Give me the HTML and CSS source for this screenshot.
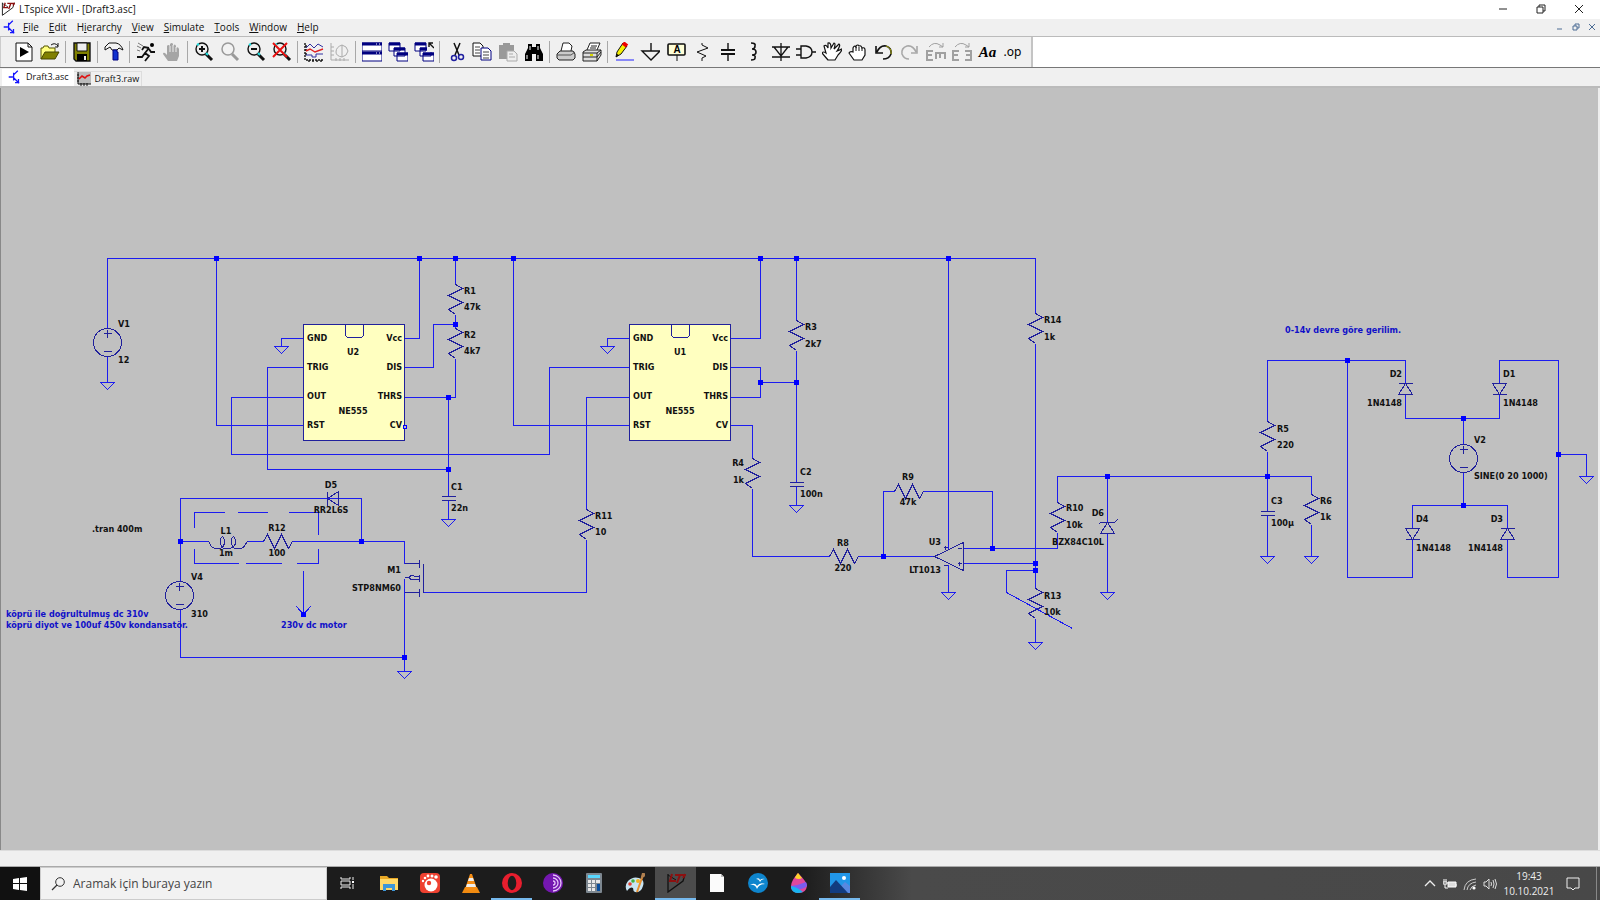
FILE: index.html
```html
<!DOCTYPE html>
<html lang="tr">
<head>
<meta charset="utf-8">
<title>LTspice XVII - [Draft3.asc]</title>
<link rel="stylesheet" href="styles.css">
</head>

<body>
<svg class="defs" aria-hidden="true">
	<defs>
		<!-- schematic parts, origin = top pin -->
		<g id="res"><path d="M0 0L7 4L-7 11L7 18L-7 25L0 30"/></g>
		<g id="resh"><path d="M0 0L4 -7L11 7L18 -7L25 7L29 0"/></g>
		<g id="gnd"><path d="M-7 0H7L0 7Z"/></g>
		<g id="cap"><path d="M-7 0H7M-7 4H7"/></g>
		<g id="dup"><path d="M-7 0H7M0 0L-7 11H7Z"/></g>
		<g id="ddn"><path d="M-7 11H7M0 11L-7 0H7Z"/></g>
		<g id="src"><circle r="14"/><path d="M-4 -9H4M0 -13V-5M-4 9H4"/></g>
		<g id="dot"><path d="M-2 -2h4v4h-4z"/></g>
		<g id="ne555">
			<rect class="chip" width="101" height="116"/>
			<path d="M42 0V9Q42 13 46 13H56Q60 13 60 9V0"/>
		</g>
		<!-- shared icons -->
		<g id="logo">
			<path d="M2 1V19L17 8L19 1" fill="none" stroke="#111" stroke-width="1.3"/>
			<path d="M2 2L10 7" fill="none" stroke="#111"/>
			<path d="M6 1L4 8H10M9 2H19L17 5M14 2L11 10" stroke="#8c1010" stroke-width="2" fill="none"/>
		</g>
		<g id="npn"><path d="M1 10H7M8 4V15M8 7L14 1M8 11L16 19M15 13V18H10" fill="none" stroke="#1414ff" stroke-width="1.8"/></g>
		<g id="lens"><circle cx="8" cy="7" r="6" fill="#eee" stroke="#111" stroke-width="1.4"/><path d="M12 12L18 18" stroke="#111" stroke-width="3"/></g>
		<g id="cascade">
			<path d="M1 1h11v8H1zM6 6h11v8H6zM9 11h11v8H9z" fill="#fff" stroke="#000080"/>
			<path d="M1 2h11M6 7h11M9 12h11" stroke="#000080" stroke-width="3"/>
		</g>
	</defs>
</svg>

<div class="app">
	<header class="title">
		<svg class="i14" viewBox="0 0 20 20"><use href="#logo"/></svg>
		<h1>LTspice XVII - [Draft3.asc]</h1>
		<div class="win">
			<button aria-label="Minimize"><svg viewBox="0 0 10 10"><path d="M1 5H9"/></svg></button>
			<button aria-label="Restore"><svg viewBox="0 0 10 10"><path d="M1 3H7V9H1ZM3 3V1H9V7H7"/></svg></button>
			<button aria-label="Close"><svg viewBox="0 0 10 10"><path d="M1 1L9 9M9 1L1 9"/></svg></button>
		</div>
	</header>

	<nav class="menu">
		<svg class="i14" viewBox="0 0 20 20"><use href="#npn"/></svg>
		<button><u>F</u>ile</button>
		<button><u>E</u>dit</button>
		<button>H<u>i</u>erarchy</button>
		<button><u>V</u>iew</button>
		<button><u>S</u>imulate</button>
		<button><u>T</u>ools</button>
		<button><u>W</u>indow</button>
		<button><u>H</u>elp</button>
		<div class="mdi">
			<button aria-label="Minimize sheet"><svg viewBox="0 0 8 8"><path d="M1 6H6"/></svg></button>
			<button aria-label="Restore sheet"><svg viewBox="0 0 8 8"><path d="M1 3H5V7H1ZM3 3V1H7V5H5"/></svg></button>
			<button aria-label="Close sheet"><svg viewBox="0 0 8 8"><path d="M1 1L7 7M7 1L1 7"/></svg></button>
		</div>
	</nav>

	<div class="tools">
		<div class="bar">
			<button aria-label="New schematic"><svg viewBox="0 0 20 20"><path d="M2 1H14L18 5V19H2Z" fill="#fff" stroke="#111"/><path d="M14 1V5H18" fill="none" stroke="#111"/><path d="M6 5L15 10L6 15Z"/></svg></button>
			<button aria-label="Open"><svg viewBox="0 0 20 20"><path d="M1 17V6H3L4 4H8L9 6H15V10" fill="#ffff80" stroke="#555500"/><path d="M1 17L5 10H19L15 17Z" fill="#808000" stroke="#444400"/><path d="M11 3Q15 0 18 4M18 1V5H15" fill="none" stroke="#111"/></svg></button>
			<i></i>
			<button aria-label="Save"><svg viewBox="0 0 20 20"><path d="M2 1H18V19H4L2 17Z" fill="#808000" stroke="#111" stroke-width="1.4"/><path d="M5 1H15V9H5Z" fill="#f0f0f0" stroke="#111"/><path d="M5 12H15V19H5Z"/><path d="M12 14h2v4h-2z" fill="#eee"/></svg></button>
			<i></i>
			<button aria-label="Control panel"><svg viewBox="0 0 20 20"><path d="M1 8V5L5 1H12Q17 2 19 8L15 6L13 8H8L6 5Z" fill="#f4f4f4" stroke="#111"/><path d="M9 8H13V10H14V18H9V10Z" fill="#1030d0" stroke="#000080"/></svg></button>
			<i></i>
			<button aria-label="Run"><svg viewBox="0 0 20 20"><circle cx="16" cy="3" r="2"/><path d="M13 6L9 11L13 14L9 19M9 11L6 15H1M13 6L8 5L6 8M13 7L15 10H19" fill="none" stroke="#111" stroke-width="1.8"/><path d="M2 1L7 4M1 4L5 6M1 8L4 9" stroke="#777"/></svg></button>
			<button aria-label="Halt" disabled><svg viewBox="0 0 20 20"><path d="M6 19L1 12Q1 10 3 11L5 13V4Q6 2 8 4V2Q10 0 11 2V4Q13 1 14 4V6Q16 4 17 7V14L15 19Z" fill="#a5a5a5"/><path d="M8 4V10M11 3V10M14 5V10" stroke="#eee"/></svg></button>
			<i></i>
			<button aria-label="Zoom in"><svg viewBox="0 0 20 20"><use href="#lens"/><path d="M5 7H11M8 4V10" stroke="#111" stroke-width="2"/><path d="M3 3L5 2M12 11l2 2" stroke="#20e0e0" stroke-width="2"/></svg></button>
			<button aria-label="Pan" disabled><svg viewBox="0 0 20 20"><circle cx="8" cy="7" r="6" fill="#f2f2f2" stroke="#999" stroke-width="1.5"/><path d="M12 12L18 18" stroke="#999" stroke-width="3"/></svg></button>
			<button aria-label="Zoom out"><svg viewBox="0 0 20 20"><use href="#lens"/><path d="M5 7H11" stroke="#111" stroke-width="2"/><path d="M3 3L5 2M12 11l2 2" stroke="#20e0e0" stroke-width="2"/></svg></button>
			<button aria-label="Zoom full extents"><svg viewBox="0 0 20 20"><use href="#lens"/><path d="M3 3L5 2M12 11l2 2" stroke="#20e0e0" stroke-width="2"/><path d="M1 1L15 15M15 1L1 15" stroke="#e81010" stroke-width="2"/></svg></button>
			<i></i>
			<button aria-label="Autorange"><svg viewBox="0 0 20 20"><path d="M1 1V18H19M1 4h2M1 8h2M1 12h2M5 18v2M9 18v2M13 18v2M17 18v2" fill="none" stroke="#111" stroke-width="1.4" stroke-dasharray="2 1"/><path d="M2 6L6 2L10 6L14 2L19 5M2 13H8V15H12V12H19" fill="none" stroke="#3030a0"/><path d="M2 9L6 7L11 10L19 7" fill="none" stroke="#e02020" stroke-width="1.4"/></svg></button>
			<button aria-label="FFT" disabled><svg viewBox="0 0 20 20"><path d="M1 1V18H19M1 5h3M1 9h3M1 13h3M6 16v3M10 16v3M14 16v3M12 3Q6 5 6 10Q6 14 12 15M12 3V15M12 3Q17 4 18 9Q17 14 12 15" fill="none" stroke="#aaa"/></svg></button>
			<i></i>
			<button aria-label="Tile windows"><svg viewBox="0 0 20 20"><path d="M0 1H20V19H0Z" fill="#fff" stroke="#000080"/><path d="M0 2H20M0 11H20" stroke="#000080" stroke-width="3"/><path d="M14 2h1M17 2h1M14 11h1M17 11h1" stroke="#fff"/><path d="M0 9H20" stroke="#000080"/></svg></button>
			<button aria-label="Cascade windows"><svg viewBox="0 0 20 20"><use href="#cascade"/></svg></button>
			<button aria-label="Close all"><svg viewBox="0 0 20 20"><use href="#cascade"/><path d="M13 0H20V10H13Z" fill="#f0f0f0"/><path d="M20 6L15 1M15 5V1H19" fill="none" stroke="#111" stroke-width="1.4"/></svg></button>
			<i></i>
			<button aria-label="Cut"><svg viewBox="0 0 20 20"><path d="M8 1L13 13M14 1L9 13" stroke="#111" stroke-width="1.5"/><g fill="none" stroke="#2020a0" stroke-width="1.5"><circle cx="8" cy="16" r="2.5"/><circle cx="15" cy="15" r="2.5"/></g></svg></button>
			<button aria-label="Copy"><svg viewBox="0 0 20 20"><path d="M1 1H8L11 4V14H1Z" fill="#fff" stroke="#111"/><path d="M3 5H8M3 8H8M3 11H8" stroke="#444"/><path d="M9 6H16L19 9V18H9Z" fill="#fff" stroke="#000080"/><path d="M11 10H17M11 13H17M11 16H17" stroke="#444"/></svg></button>
			<button aria-label="Paste" disabled><svg viewBox="0 0 20 20"><path d="M1 3H5V1H12V3H16V17H1Z" fill="#999"/><path d="M9 9H16L19 12V19H9Z" fill="#eee" stroke="#aaa"/><path d="M11 12H15M11 15H17" stroke="#aaa"/></svg></button>
			<button aria-label="Find"><svg viewBox="0 0 20 20"><path d="M4 2H8V5H12V2H16V6L19 12V19H12V12H8V19H1V12L4 6Z"/><path d="M3 13V17M14 13V17M6 4V8M14 4V8" stroke="#fff"/></svg></button>
			<i></i>
			<button aria-label="Print"><svg viewBox="0 0 20 20"><path d="M5 9L7 1H13L16 4L15 9" fill="#fff" stroke="#222"/><path d="M1 12L4 9H17L19 12V16L17 18H3L1 16Z" fill="#ccc" stroke="#222"/><path d="M1 13H15L19 10" fill="none" stroke="#555"/></svg></button>
			<button aria-label="Print setup"><svg viewBox="0 0 20 20"><path d="M5 8L8 1H18L15 8" fill="#fff" stroke="#222"/><path d="M9 4H15M8 6H14" stroke="#222"/><path d="M1 10L4 8H19V13L15 19H1Z" fill="#ddd" stroke="#222"/><path d="M1 11H15L19 8M1 15H15L19 10M15 11V19" fill="none" stroke="#222"/><path d="M8 13h3" stroke="#d8d800" stroke-width="2"/></svg></button>
			<i></i>
			<button aria-label="Wire"><svg viewBox="0 0 20 20"><path d="M2 15L3 10L9 1L13 4L7 12Z" fill="#f4f000" stroke="#111"/><path d="M9 1L13 4" stroke="#e00" stroke-width="4"/><path d="M2 15L3 12L5 13Z"/><path d="M2 18H20" stroke="#2020ff"/></svg></button>
			<button aria-label="Ground"><svg viewBox="0 0 20 20"><path d="M11 1V9M2 9H20L11 18Z" fill="none" stroke="#111" stroke-width="1.4"/></svg></button>
			<button aria-label="Label net"><svg viewBox="0 0 20 20"><rect x="2" y="2" width="17" height="11" rx="1" fill="#ffffd8" stroke="#111" stroke-width="1.6"/><path d="M11 13V19" stroke="#111"/><text x="11" y="11" font-size="10" text-anchor="middle">A</text></svg></button>
			<button aria-label="Resistor"><svg viewBox="0 0 20 20"><path d="M10 1V3L16 6L5 10L14 14L10 16V19" fill="none" stroke="#111"/></svg></button>
			<button aria-label="Capacitor"><svg viewBox="0 0 20 20"><path d="M10 1V8M10 12V19" stroke="#111" stroke-width="1.4"/><path d="M3 8H17M3 12H17" stroke="#111" stroke-width="2"/></svg></button>
			<button aria-label="Inductor"><svg viewBox="0 0 20 20"><path d="M7 1Q12 1 11 4Q11 7 8 7Q12 7 12 10Q12 13 8 13Q12 13 11 16Q11 18 7 18" fill="none" stroke="#111" stroke-width="1.6"/></svg></button>
			<button aria-label="Diode"><svg viewBox="0 0 20 20"><path d="M11 1V19M2 5H20M4 5L11 14L18 5M2 15H20" fill="none" stroke="#111" stroke-width="1.3"/></svg></button>
			<button aria-label="Component"><svg viewBox="0 0 20 20"><path d="M5 4H10Q16 5 16 10Q16 15 10 16H5ZM0 7H5M0 13H5M16 10H20" fill="none" stroke="#111" stroke-width="1.4"/></svg></button>
			<button aria-label="Move"><svg viewBox="0 0 20 20"><path d="M6 18L0 11Q1 9 4 11L2 4Q4 2 6 6L6 1Q9 0 9 6L12 1Q14 1 12 7L17 2Q19 3 15 9L20 7Q20 9 16 13L13 18Z" fill="#fff" stroke="#111" stroke-width="1.2"/></svg></button>
			<button aria-label="Drag"><svg viewBox="0 0 20 20"><path d="M6 18L1 11Q2 9 5 10V6Q6 3 8 5V4Q10 2 11 4Q13 3 14 6Q17 5 17 8V13L14 18Z" fill="#fff" stroke="#111" stroke-width="1.2"/><path d="M8 5V9M11 5V9M14 6V9" stroke="#111"/></svg></button>
			<button aria-label="Undo"><svg viewBox="0 0 20 20"><path d="M2 4V11H9M3 10Q6 3 12 4Q18 6 17 12Q15 17 9 17" fill="none" stroke="#111" stroke-width="1.6"/><path d="M12 4Q18 6 17 12" fill="none" stroke="#a0a000"/></svg></button>
			<button aria-label="Redo" disabled><svg viewBox="0 0 20 20"><path d="M17 4V11H11M16 10Q13 3 7 4Q1 6 2 12Q4 17 9 17" fill="none" stroke="#a8a8a8" stroke-width="1.6"/></svg></button>
			<button aria-label="Rotate" disabled><svg viewBox="0 0 20 20"><path d="M7 9H1V18H7M1 13H6M10 17V11H19V17M14 11V16" fill="none" stroke="#a0a0a0" stroke-width="2"/><path d="M3 5Q8 -1 14 3L17 5M17 1V5H13" fill="none" stroke="#a0a0a0"/></svg></button>
			<button aria-label="Mirror" disabled><svg viewBox="0 0 20 20"><path d="M7 9H1V18H7M1 13H6M13 9H19V18H13M19 13H14" fill="none" stroke="#a0a0a0" stroke-width="2"/><path d="M3 5Q8 -1 14 3L17 5M17 1V5H13" fill="none" stroke="#a0a0a0"/></svg></button>
			<button class="txt aa">Aa</button>
			<button class="txt op">.op</button>
		</div>
	</div>

	<div class="tabs">
		<button class="on"><svg class="i14" viewBox="0 0 20 20"><use href="#npn"/></svg>Draft3.asc</button>
		<button><svg class="i14" viewBox="0 0 14 14"><rect x="1" width="13" height="12" fill="#bbb"/><path d="M1 0V12H14M0 3h2M0 6h2M0 9h2M4 11v3M7 11v3M10 11v3" fill="none" stroke="#111"/><path d="M2 7L5 4L8 6L10 4L13 3" fill="none" stroke="#e01010" stroke-width="1.6"/></svg>Draft3.raw</button>
	</div>

	<main class="sheet">
		<svg class="sch">
			<g transform="translate(-.5 -87.5)">
				<!-- wires -->
				<g class="wire">
					<path d="M107 328V258H1035V313M107 356V382"/>
					<path d="M216 258V425H303M303 338H281V346M303 367H267V469H448M303 397H231V454H549V367H629"/>
					<path d="M404 338H419V258M404 367H433V324H455M455 258V284M455 314V328M455 358V397H404M448 397V496M448 500V519"/>
					<path d="M513 258V425H629M629 338H607V346M629 397H586V509M586 539V592H423"/>
					<path d="M730 338H760V258M730 367H760V397H730M760 382H796M796 258V320M796 350V482M796 486V505"/>
					<path d="M730 425H752V458M752 488V556H829M858 556H934M883 556V491H894M923 491H992V548M963 548H1057V532M1057 502V476H1311V494M963 563H1035"/>
					<path d="M948 258V548M948 564V592M1035 343V588M1035 618V642M1035 570H1006V592L1072 628"/>
					<path d="M1107 476V522M1107 533V592"/>
					<path d="M1267 421V360H1405V383M1267 451V511M1267 515V556M1311 524V556M1347 360V577H1412V539M1412 528V505H1507V528"/>
					<path d="M1405 394V418H1499V394M1499 383V360H1558V577H1507V539M1463 418V444M1463 472V505M1558 454H1586V476"/>
					<path d="M180 581V498H361V541M180 541H208M247 541H263M292 541H404V563M180 609V657H404M404 578V671"/>
					<path d="M194 527V512H224M237 512H267M288 512H318V534M194 548V563H238M245 563H281M296 563H318V548"/>
					<path d="M303 570V614M296 606L303 614L310 606"/>
					<use href="#gnd" x="107" y="382"/><use href="#gnd" x="281" y="346"/><use href="#gnd" x="448" y="519"/>
					<use href="#gnd" x="404" y="671"/><use href="#gnd" x="607" y="346"/><use href="#gnd" x="796" y="505"/>
					<use href="#gnd" x="948" y="592"/><use href="#gnd" x="1035" y="642"/><use href="#gnd" x="1107" y="592"/>
					<use href="#gnd" x="1267" y="556"/><use href="#gnd" x="1311" y="556"/><use href="#gnd" x="1586" y="476"/>
				</g>

				<!-- parts -->
				<g class="part">
					<use href="#ne555" x="303" y="324"/><use href="#ne555" x="629" y="324"/>
					<use href="#src" x="107" y="342"/><use href="#src" x="179" y="595"/><use href="#src" x="1463" y="458"/>
					<use href="#res" x="455" y="284"/><use href="#res" x="455" y="328"/><use href="#res" x="586" y="509"/>
					<use href="#res" x="796" y="320"/><use href="#res" x="752" y="458"/><use href="#res" x="1035" y="313"/>
					<use href="#res" x="1035" y="588"/><use href="#res" x="1057" y="502"/><use href="#res" x="1267" y="421"/>
					<use href="#res" x="1311" y="494"/>
					<use href="#resh" x="263" y="541"/><use href="#resh" x="829" y="556"/><use href="#resh" x="894" y="491"/>
					<use href="#cap" x="448" y="496"/><use href="#cap" x="796" y="482"/><use href="#cap" x="1267" y="511"/>
					<use href="#dup" x="1405" y="383"/><use href="#dup" x="1507" y="528"/>
					<use href="#ddn" x="1499" y="383"/><use href="#ddn" x="1412" y="528"/>
					<path d="M327 491V505M327 498L338 491V505Z"/>
					<path d="M1098 524L1100 522H1114L1117 519M1107 522L1100 533H1114Z"/>
					<path d="M208 541L211 546Q213 548 216 548H219Q224 547 224 541Q223 536 222 536Q220 537 220 541Q220 548 225 548H229Q235 547 235 541Q234 536 233 536Q231 537 231 541Q231 548 236 548H239Q243 548 244 545L247 541"/>
					<path d="M404 563H419M404 592H419M404 577H409M413 576H419M413 579H419M419 559V567M419 574V581M419 588V596M423 563V592M413 575H410L409 577L410 579H413"/>
					<path d="M934 556L963 542V570Z"/>
					<path d="M943 547H947M945 545V549M943 565H947M957 548H961M957 563H961M959 561V565"/>
				</g>
				<rect class="open" x="403" y="425" width="3" height="3"/>

				<g class="node">
					<use href="#dot" x="216" y="258"/><use href="#dot" x="419" y="258"/><use href="#dot" x="455" y="258"/>
					<use href="#dot" x="513" y="258"/><use href="#dot" x="760" y="258"/><use href="#dot" x="796" y="258"/>
					<use href="#dot" x="948" y="258"/><use href="#dot" x="455" y="324"/><use href="#dot" x="448" y="397"/>
					<use href="#dot" x="448" y="469"/><use href="#dot" x="760" y="382"/><use href="#dot" x="796" y="382"/>
					<use href="#dot" x="883" y="556"/><use href="#dot" x="992" y="548"/><use href="#dot" x="1035" y="563"/>
					<use href="#dot" x="1035" y="570"/><use href="#dot" x="1107" y="476"/><use href="#dot" x="1267" y="476"/>
					<use href="#dot" x="1347" y="360"/><use href="#dot" x="1463" y="418"/><use href="#dot" x="1463" y="505"/>
					<use href="#dot" x="1558" y="454"/><use href="#dot" x="180" y="541"/><use href="#dot" x="361" y="541"/>
					<use href="#dot" x="404" y="657"/><use href="#dot" x="303" y="614"/>
				</g>
			</g>

			<!-- names and values -->
			<g transform="translate(-1 -89)">
				<g class="lbl">
					<text x="118" y="328">V1</text><text x="118" y="364">12</text>
					<text x="307" y="342">GND</text><text x="307" y="371">TRIG</text><text x="307" y="400">OUT</text><text x="307" y="429">RST</text>
					<text x="633" y="342">GND</text><text x="633" y="371">TRIG</text><text x="633" y="400">OUT</text><text x="633" y="429">RST</text>
					<text x="464" y="295">R1</text><text x="464" y="311">47k</text>
					<text x="464" y="339">R2</text><text x="464" y="355">4k7</text>
					<text x="451" y="491">C1</text><text x="451" y="512">22n</text>
					<text x="595" y="520">R11</text><text x="595" y="536">10</text>
					<text x="805" y="331">R3</text><text x="805" y="348">2k7</text>
					<text x="800" y="476">C2</text><text x="800" y="498">100n</text>
					<text x="1044" y="324">R14</text><text x="1044" y="341">1k</text>
					<text x="1044" y="600">R13</text><text x="1044" y="616">10k</text>
					<text x="1066" y="512">R10</text><text x="1066" y="529">10k</text>
					<text x="1277" y="433">R5</text><text x="1277" y="449">220</text>
					<text x="1271" y="505">C3</text><text x="1271" y="527">100µ</text>
					<text x="1320" y="505">R6</text><text x="1320" y="521">1k</text>
					<text x="1503" y="378">D1</text><text x="1503" y="407">1N4148</text>
					<text x="1416" y="523">D4</text><text x="1416" y="552">1N4148</text>
					<text x="1474" y="444">V2</text><text x="1474" y="480">SINE(0 20 1000)</text>
					<text x="191" y="581">V4</text><text x="191" y="618">310</text>
					<text x="92" y="533">.tran 400m</text>
				</g>
				<g class="lbl end">
					<text x="402" y="342">Vcc</text><text x="402" y="371">DIS</text><text x="402" y="400">THRS</text><text x="402" y="429">CV</text>
					<text x="728" y="342">Vcc</text><text x="728" y="371">DIS</text><text x="728" y="400">THRS</text><text x="728" y="429">CV</text>
					<text x="744" y="467">R4</text><text x="744" y="484">1k</text>
					<text x="941" y="546">U3</text><text x="941" y="574">LT1013</text>
					<text x="1104" y="517">D6</text><text x="1104" y="546">BZX84C10L</text>
					<text x="1402" y="378">D2</text><text x="1402" y="407">1N4148</text>
					<text x="1503" y="523">D3</text><text x="1503" y="552">1N4148</text>
					<text x="401" y="574">M1</text><text x="401" y="592">STP8NM60</text>
				</g>
				<g class="lbl mid">
					<text x="353" y="356">U2</text><text x="353" y="415">NE555</text>
					<text x="680" y="356">U1</text><text x="680" y="415">NE555</text>
					<text x="331" y="489">D5</text><text x="331" y="514">RR2L6S</text>
					<text x="226" y="535">L1</text><text x="226" y="557">1m</text>
					<text x="277" y="532">R12</text><text x="277" y="557">100</text>
					<text x="843" y="547">R8</text><text x="843" y="572">220</text>
					<text x="908" y="481">R9</text><text x="908" y="506">47k</text>
				</g>
				<g class="lbl note">
					<text x="1285" y="334">0-14v devre göre gerilim.</text>
					<text x="6" y="618">köprü ile doğrultulmuş dc 310v</text>
					<text x="6" y="629">köprü diyot ve 100uf 450v kondansatör.</text>
					<text x="281" y="629">230v dc motor</text>
				</g>
			</g>
		</svg>
	</main>
	<div class="status"></div>

	<footer class="task">
		<button class="start" aria-label="Başlat"><svg viewBox="0 0 14 14"><path d="M0 2L6 1V6H0ZM7 1L14 0V6H7ZM0 7H6V13L0 12ZM7 7H14V14L7 13Z" fill="#fff"/></svg></button>
		<label class="search">
			<svg viewBox="0 0 14 14"><circle cx="9" cy="5" r="4.3" fill="none" stroke="#333"/><path d="M6 8L1 13" stroke="#333" stroke-width="1.2"/></svg>
			<input type="text" placeholder="Aramak için buraya yazın" aria-label="Arama">
		</label>
		<div class="apps">
			<button aria-label="Görev görünümü"><svg viewBox="0 0 20 20"><path d="M3 4V6H12V4M3 16V14H12V16M3 8H12V12H3ZM15 4V7M15 11V16" fill="none" stroke="#eee"/><path d="M14 8h2v2h-2z" fill="#fff"/></svg></button>
			<button aria-label="Dosya Gezgini"><svg viewBox="0 0 20 20"><path d="M1 3H8L10 5H19V17H1Z" fill="#e8a825"/><path d="M1 6H19V17H1Z" fill="#ffd868"/><path d="M4 18V11H16V18H13V15H7V18Z" fill="#3d96d8"/></svg></button>
			<button aria-label="GOM"><svg viewBox="0 0 20 20"><rect width="20" height="20" rx="4" fill="#ee4130"/><circle cx="11" cy="12" r="6.5" fill="#fff"/><circle cx="9" cy="10" r="2.2" fill="#ee4130"/><g fill="#fff"><circle cx="3" cy="8" r="1.2"/><circle cx="5" cy="5" r="1.3"/><circle cx="8" cy="3" r="1.4"/><circle cx="12" cy="3" r="1.5"/><circle cx="16" cy="4" r="1.8"/></g></svg></button>
			<button aria-label="VLC"><svg viewBox="0 0 20 20"><path d="M4 14H16L19 20H1Z" fill="#f08a10"/><path d="M9 1H11L16 16Q10 19 4 16Z" fill="#f78e14"/><path d="M8 5H12L13 8H7ZM6 11H14L15 14H5Z" fill="#eee"/></svg></button>
			<button class="run" aria-label="Opera"><svg viewBox="0 0 20 20"><circle cx="10" cy="10" r="10" fill="#e81e2e"/><ellipse cx="10" cy="10" rx="4.3" ry="7.2" fill="#1e1e1e"/></svg></button>
			<button aria-label="Tor Browser"><svg viewBox="0 0 20 20"><circle cx="10" cy="10" r="10" fill="#7417b0"/><path d="M10 2A8 8 0 0 1 10 18M10 5A5 5 0 0 1 10 15M10 8A2 2 0 0 1 10 12" fill="none" stroke="#e6c6f8" stroke-width="1.3"/></svg></button>
			<button aria-label="Hesap Makinesi"><svg viewBox="0 0 20 20"><rect x="2" width="16" height="20" rx="1" fill="#7d8790"/><path d="M4 2H16V5H4Z" fill="#58d8ff"/><path d="M4 7h3v3H4zM8 7h3v3H8zM12 7h4v3h-4zM4 11h3v3H4zM8 11h3v3H8zM4 15h3v3H4zM8 15h3v3H8z" fill="#e8e8e8"/><path d="M13 11h3v7h-3z" fill="#0a4e9c"/></svg></button>
			<button aria-label="Paint"><svg viewBox="0 0 20 20"><path d="M2 18Q-1 13 3 8Q8 3 14 5Q20 7 18 13Q16 20 10 19Q8 18 8 15Q5 13 2 18Z" fill="#c8e4f2"/><circle cx="5" cy="11" r="1.8" fill="#e04030"/><circle cx="8" cy="8" r="1.8" fill="#40b040"/><circle cx="13" cy="8" r="2" fill="#f0b020"/><path d="M12 19L18 2" stroke="#e89030" stroke-width="2"/><path d="M17 4L18 0L20 2Z" stroke="#b08050" stroke-width="2"/></svg></button>
			<button class="run act" aria-label="LTspice XVII"><svg viewBox="0 0 20 20"><use href="#logo"/></svg></button>
			<button aria-label="Belge"><svg viewBox="0 0 20 20"><path d="M3 1H14L17 4V19H3Z" fill="#fbfbfb"/><path d="M14 1V4H17" fill="#bbb"/></svg></button>
			<button aria-label="OpenOffice"><svg viewBox="0 0 20 20"><circle cx="10" cy="10" r="10" fill="#0e85cd"/><path d="M8 6Q11 4 12 7Q14 5 17 6Q13 6 12 9Q11 6 8 6ZM2 12Q7 9 9 13Q12 9 17 11Q11 11 9 16Q7 11 2 12Z" fill="#fff"/></svg></button>
			<button aria-label="Paint 3D"><svg viewBox="0 0 20 20"><path d="M9 0Q18 9 18 13Q17 20 10 20Q2 20 2 13Q2 8 9 0Z" fill="#e0489c"/><path d="M9 0Q6 4 6 5Q10 7 13 5Z" fill="#ffd42a"/><path d="M2 13Q10 12 17 9Q18 11 18 13Q14 17 3 17Z" fill="#7a5cf0"/><path d="M2 13Q8 14 14 19Q8 21 5 19Q2 17 2 13Z" fill="#18b4f0"/></svg></button>
			<button class="run" aria-label="Fotoğraflar"><svg viewBox="0 0 20 20"><path d="M0 0H20V20H0Z" fill="#2196e8"/><path d="M10 14L15 9L20 13V20H10Z" fill="#5888e0"/><path d="M0 14L6 7L18 20H0Z" fill="#123c80"/><circle cx="14" cy="5" r="2" fill="#fff"/></svg></button>
		</div>
		<div class="tray">
			<button aria-label="Gizli simgeler"><svg viewBox="0 0 14 14"><path d="M2 9L7 4L12 9" fill="none" stroke="#eee" stroke-width="1.3"/></svg></button>
			<button aria-label="Pil"><svg viewBox="0 0 14 14"><path d="M5 5H13V10H5Z" fill="#ddd" stroke="#fff"/><path d="M14 7v2M1 2v3M3 2v3M0 5h4v2h-4zM2 7v4H5" stroke="#fff" fill="none"/></svg></button>
			<button aria-label="Ağ"><svg viewBox="0 0 14 14"><path d="M1 13Q2 3 13 2M4 13Q5 6 13 5M7 13Q8 9 13 8" fill="none" stroke="#ccc"/><circle cx="11" cy="11" r="1.6" fill="#fff"/></svg></button>
			<button aria-label="Ses"><svg viewBox="0 0 14 14"><path d="M1 5H3L6 2V12L3 9H1ZM8 5Q9 7 8 9M10 3Q12 7 10 11M12 2Q15 7 12 12" fill="none" stroke="#ddd"/></svg></button>
			<div class="clock"><time>19:43</time><time>10.10.2021</time></div>
			<button class="note-btn" aria-label="Bildirimler"><svg viewBox="0 0 14 14"><path d="M1 1H13V11H9L7 13L5 11H1Z" fill="none" stroke="#eee"/></svg></button>
		</div>
	</footer>
</div>
</body>
</html>
```
FILE: styles.css
```css
*{margin:0; padding:0; box-sizing:border-box;}
body{font:10px/14px "Open Sans","Noto Sans",sans-serif; color:#111; background:#f0f0f0;}
button,input{font:inherit; color:inherit; border:none; background:none; outline:none;}
svg{display:block; flex:none;}
.defs{position:absolute; width:0; height:0;}
.app{display:flex; flex-direction:column; height:100vh;}
.i14{width:14px; height:14px;}

.title{display:flex; align-items:center; height:19px; background:#fff; padding:0 0 2px 1px;}
.title h1{flex:1; margin-left:4px; font-size:10px; font-weight:normal;}
.win{display:flex; margin-right:2px;}
.win button{width:38px; height:16px; display:flex; align-items:center; justify-content:center;}
.win svg{width:10px; height:10px; fill:none; stroke:#222;}

.menu{display:flex; align-items:center; height:17px; padding:0 0 2px 3px;}
.menu .i14{margin-right:1px;}
.menu button{padding:0 5px;}
.mdi{display:flex; margin-left:auto;}
.mdi button{width:16px; padding:0 4px;}
.mdi svg{width:8px; height:8px; fill:none; stroke:#4c6c94;}

.tools{height:32px; background:#fff; border-top:1px solid #bbb; border-bottom:1px solid #777;}
.bar{display:flex; align-items:center; width:max-content; height:30px; padding:0 6px 0 10px; background:#f0f0f0; border-right:2px solid #c4c4c4; border-left:1px solid #ccc;}
.bar button{width:26px; height:26px; display:flex; align-items:center; justify-content:center;}
.bar svg{width:20px; height:20px;}
.bar svg text{font-family:"Liberation Sans",sans-serif; font-weight:bold;}
.bar i{width:1px; height:22px; margin:0 3px 0 2px; background:#a8a8a8;}
.bar .txt{width:25px; color:#000;}
.bar .aa{font:italic bold 15px/20px "Liberation Serif",serif;}
.bar .op{font:12px/16px "Noto Sans",sans-serif;}

.tabs{display:flex; align-items:flex-end; height:20px; padding:1px 0 0 2px; border-bottom:2px solid #bbb;}
.tabs button{display:flex; align-items:center; height:15px; padding:0 2px 0 3px; border-right:1px solid #ddd; border-top:1px solid #ddd; font-size:9px;}
.tabs svg{margin-right:4px;}
.tabs .on{height:17px; padding:0 5px 2px 6px; background:#fff; border:none;}

.sheet{flex:1; min-height:0; background:#c0c0c0; border-left:1px solid #888; border-right:2px solid #eee; overflow:hidden;}
.sch{width:100%; height:100%; shape-rendering:crispEdges;}
.wire{fill:none; stroke:#1c1cf0;}
.part{fill:none; stroke:#20209c;}
.chip{fill:#ffffc0;}
.node{fill:#0000ff; stroke:#0000ff;}
.open{fill:#c0c0c0; stroke:#0000ff;}
.lbl{font:bold 9px "DejaVu Sans Condensed","DejaVu Sans",sans-serif; fill:#111;}
.end{text-anchor:end;}
.mid{text-anchor:middle;}
.note{fill:#1010c8;}
.status{height:17px; border-top:1px solid #ddd; border-bottom:1px solid #aaa;}

.task{display:flex; height:33px; background:linear-gradient(90deg,#1c1c1c 50%,#4a4a4a 57%,#484848); color:#eee;}
.task button{display:flex; align-items:center; justify-content:center;}
.start{width:40px; background:#111;}
.start svg{width:14px; height:14px;}
.search{display:flex; align-items:center; width:287px; padding-left:10px; background:#f2f2f2; border:1px solid #ccc;}
.search svg{width:14px; height:14px; margin-right:8px;}
.search input{flex:1; min-width:0; font-size:12px;}
.search input::placeholder{color:#444; opacity:1;}
.apps{display:flex;}
.apps button{width:41px; border-bottom:2px solid transparent;}
.apps svg{width:20px; height:20px;}
.apps .run{border-bottom-color:#76b9ed;}
.apps .act{background:#4c4c4c;}
.tray{display:flex; margin-left:auto; margin-right:3px; border-right:1px solid #888;}
.tray button{width:20px;}
.tray svg{width:14px; height:14px;}
.clock{display:flex; flex-direction:column; justify-content:center; width:58px; line-height:15px; text-align:center;}
.tray .note-btn{width:38px; padding-right:8px;}
```
